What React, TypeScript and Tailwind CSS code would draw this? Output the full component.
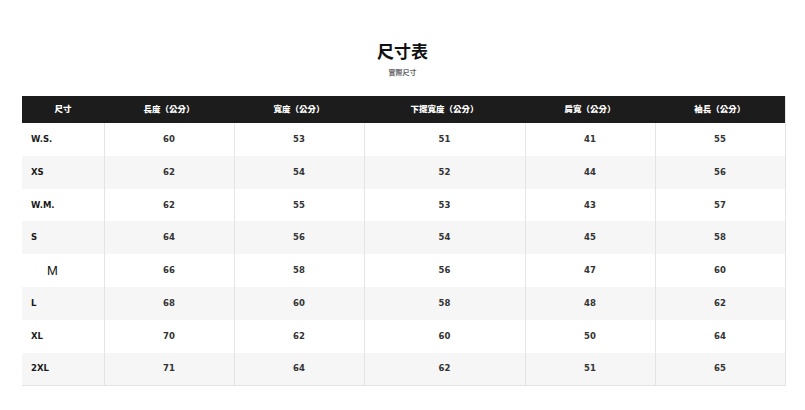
const headers = ["尺寸", "長度（公分）", "寬度（公分）", "下擺寬度（公分）", "肩寬（公分）", "袖長（公分）"];

const rows = [
  ["W.S.", "60", "53", "51", "41", "55"],
  ["XS", "62", "54", "52", "44", "56"],
  ["W.M.", "62", "55", "53", "43", "57"],
  ["S", "64", "56", "54", "45", "58"],
  ["M", "66", "58", "56", "47", "60"],
  ["L", "68", "60", "58", "48", "62"],
  ["XL", "70", "62", "60", "50", "64"],
  ["2XL", "71", "64", "62", "51", "65"],
];

const widths = ["w-[82px]", "w-[130px]", "w-[130px]", "w-[161px]", "w-[130px]", "w-[130px]"];

export default function App() {
  return (
    <div className="w-[805px] h-[410px] bg-white font-['Liberation_Sans','Noto_Sans_CJK_TC',sans-serif] text-[#222]">
      <div className="pt-[43px] flex flex-col items-center">
        <h1 className="text-[17px] leading-[20px] font-bold text-[#111]">尺寸表</h1>
        <p className="mt-[5px] text-[7px] leading-[9px] text-[#666] font-bold">實際尺寸</p>
      </div>

      <table className="ml-[22px] mt-[19px] w-[763px] table-fixed border-collapse border-r border-b border-[#e4e4e4]">
        <thead>
          <tr className="h-[27px] bg-[#1c1c1c] text-white">
            {headers.map((h, i) => (
              <th key={h} className={`${widths[i]} text-[8.5px] font-black text-center`}>
                {h}
              </th>
            ))}
          </tr>
        </thead>
        <tbody className="font-['DejaVu_Sans',sans-serif]">
          {rows.map((r, ri) => (
            <tr key={r[0]} className={`h-[32.8px] ${ri % 2 === 1 ? "bg-[#f6f6f6]" : "bg-white"}`}>
              {r.map((c, ci) =>
                ci === 0 ? (
                  r[0] === "M" ? (
                    <td key={ci} className="pl-[25px] text-[13px] font-normal text-[#111] font-['Liberation_Sans',sans-serif] border-r border-[#e4e4e4]">
                      {c}
                    </td>
                  ) : (
                    <td key={ci} className="pl-[9px] text-[8.5px] font-bold text-[#1a1a1a] border-r border-[#e4e4e4]">
                      {c}
                    </td>
                  )
                ) : (
                  <td key={ci} className="text-center text-[8.5px] font-bold text-[#333] border-r border-[#e4e4e4]">
                    {c}
                  </td>
                )
              )}
            </tr>
          ))}
        </tbody>
      </table>
    </div>
  );
}
